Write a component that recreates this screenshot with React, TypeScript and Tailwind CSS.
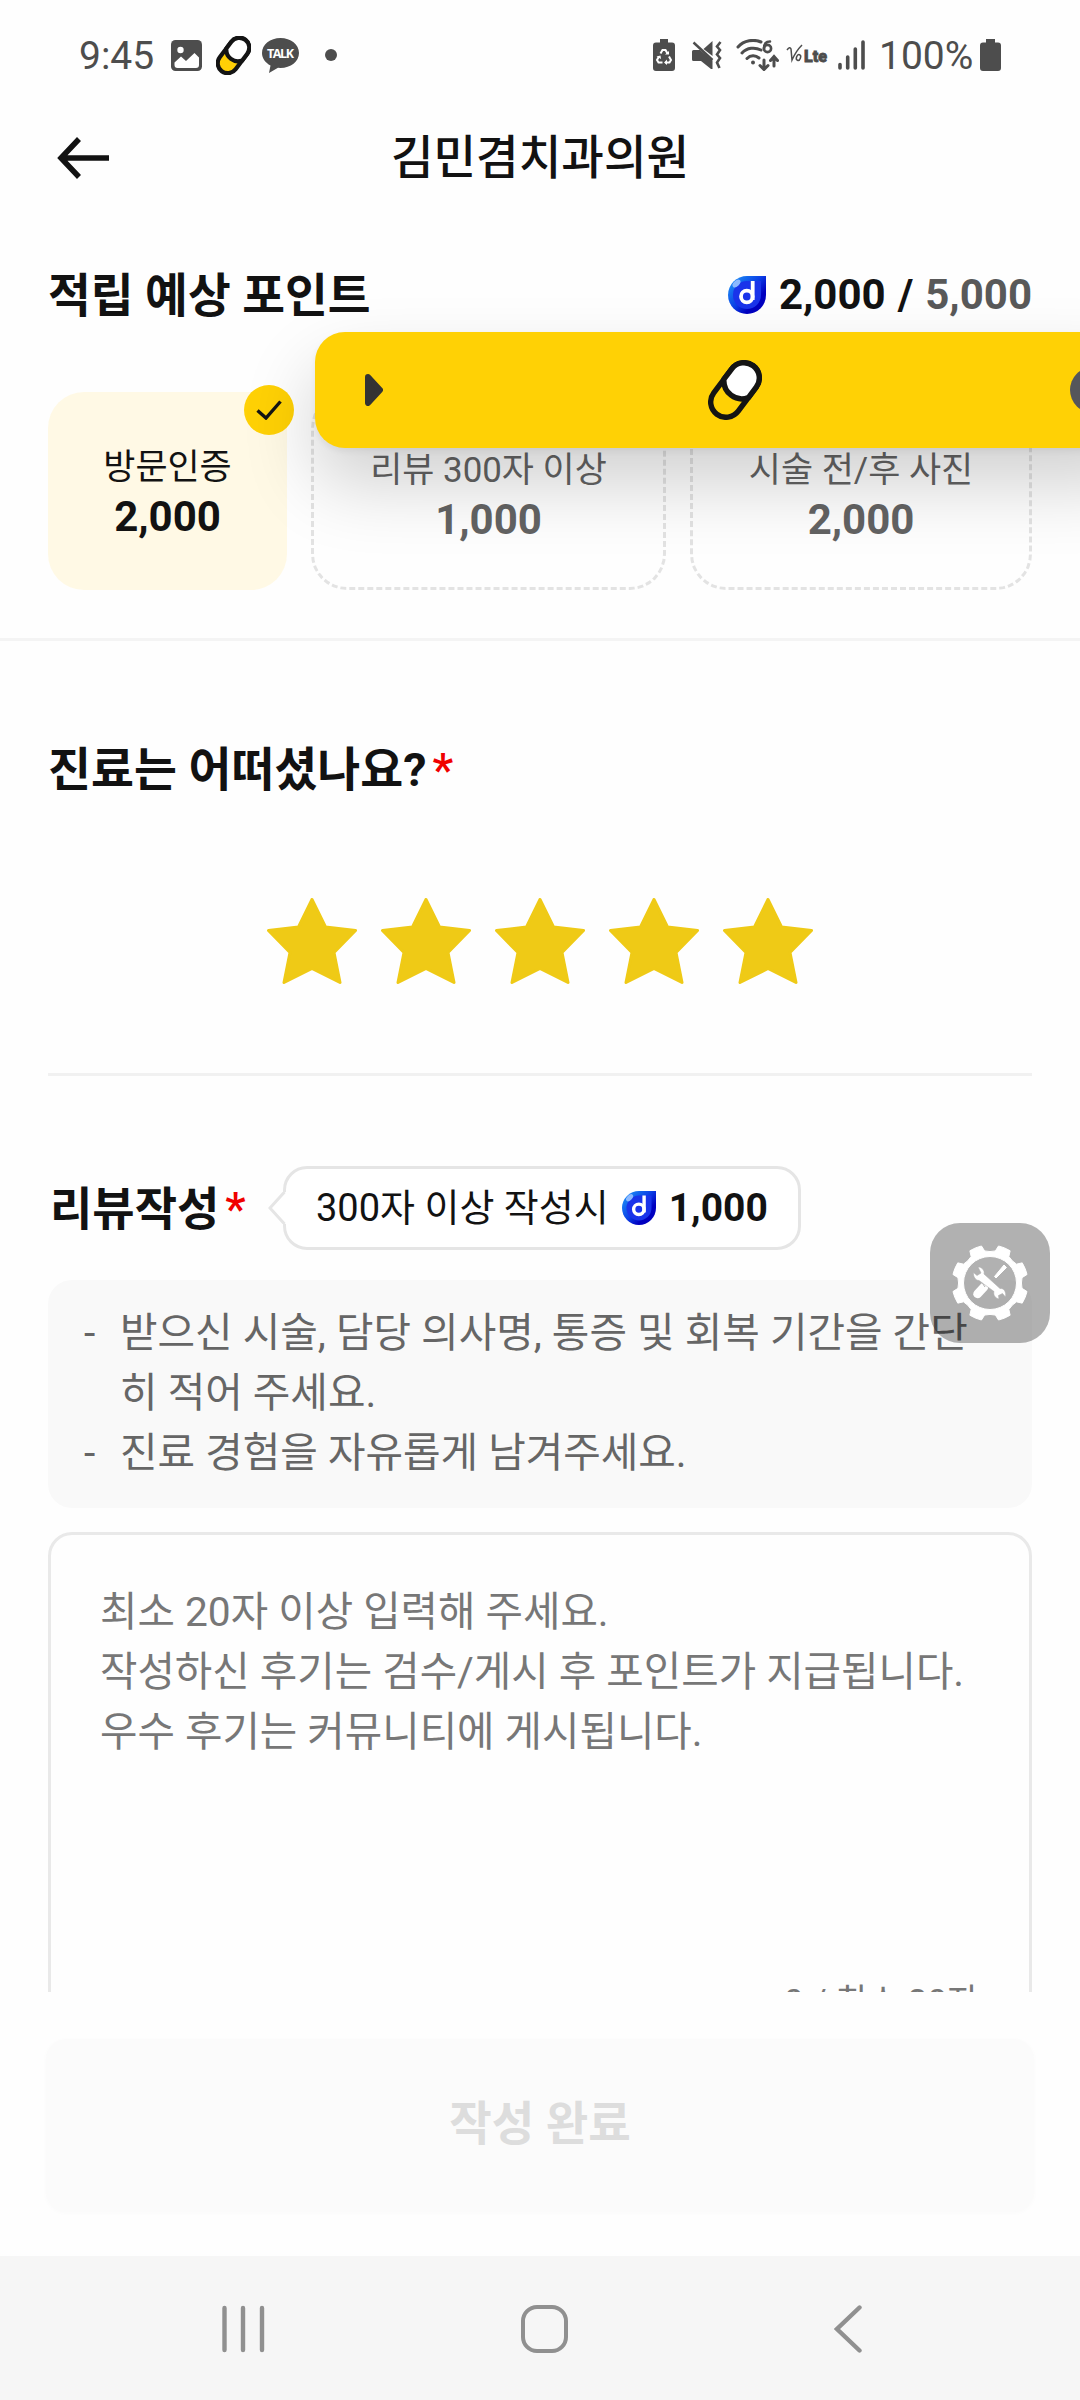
import type {ReactNode} from 'react';
import clsx from 'clsx';

const TIPS = [
  '받으신 시술, 담당 의사명, 통증 및 회복 기간을 간단히 적어 주세요.',
  '진료 경험을 자유롭게 남겨주세요.',
];

const REWARDS = [
  {label: '방문인증', point: '2,000', done: true, width: 'w-[239px]'},
  {label: '리뷰 300자 이상', point: '1,000', done: false, width: 'w-[355px]'},
  {label: '시술 전/후 사진', point: '2,000', done: false, width: 'w-[342px]'},
];

function Pill({className, fill = 'none', stroke = 5.4}: {className?: string; fill?: string; stroke?: number}) {
  return (
    <svg viewBox="0 0 54 60" className={className}>
      <g transform="translate(18 42) rotate(-53.13)" stroke="#141414" strokeWidth={stroke} strokeLinejoin="round">
        <rect x="-15.3" y="-15.3" width="60.6" height="30.6" rx="15.3" fill={fill}/>
        <path d="M17 -15.3H30A15.3 15.3 0 0 1 30 15.3H17A18 18 0 0 1 17 -15.3Z" fill="#fff"/>
      </g>
    </svg>
  );
}

function PointIcon({className}: {className?: string}) {
  return (
    <svg viewBox="0 0 38 38" className={className}>
      <defs>
        <linearGradient id="drop" x1="0.1" y1="0.1" x2="0.9" y2="0.8">
          <stop offset="0" stopColor="#1c8cf5"/>
          <stop offset="0.5" stopColor="#0b3fe6"/>
          <stop offset="0.8" stopColor="#0000c0"/>
        </linearGradient>
      </defs>
      <path d="M19 0H38V19A19 19 0 1 1 19 0Z" fill="url(#drop)"/>
      <path d="M19 5H33V19A14 14 0 1 1 19 5Z" fill="#1a34ea"/>
      <ellipse cx="8.5" cy="7.5" rx="4.8" ry="2.8" fill="#8db9ff" transform="rotate(-45 8.5 7.5)"/>
      <circle cx="18.8" cy="20.5" r="5.8" fill="none" stroke="#fff" strokeWidth="3.8"/>
      <path d="M24.7 5V24" stroke="#fff" strokeWidth="3.8"/>
    </svg>
  );
}

function StatusBar() {
  return (
    <div className="flex h-[110px] shrink-0 items-center justify-between pl-[79px] pr-[79px] text-[39px] leading-[40px] text-[#4d4d4d]">
      <div className="flex items-center">
        <span className="w-[92px] pt-px">9:45</span>
        <svg viewBox="0 0 31 31" className="size-[31px]">
          <rect width="31" height="31" rx="4.5" fill="#4d4d4d"/>
          <circle cx="9.5" cy="10" r="3.2" fill="#fff"/>
          <path d="M3.5 25V22.5L10 16.5L15 21L23.5 13L28 17.5V25Q28 28 25 28H6.500Q3.500 28 3.500 25Z" fill="#fff"/>
        </svg>
        <Pill className="ml-[14px] h-[39px] w-[35px]" fill="#ffcf06" stroke={6.5}/>
        <svg viewBox="0 0 37 35" className="ml-[11px] h-[35px] w-[37px]">
          <path d="M18.500 0C28.700 0 37 6.600 37 15S28.700 30 18.500 30L16 29.800L7 35L8.500 27.500C3.300 24.700 0 20.300 0 15C0 6.600 8.300 0 18.500 0Z" fill="#4d4d4d"/>
          <text x="18.500" y="20" textAnchor="middle" fontSize="12.500" fontWeight="700" fill="#fff" textLength="27" className="font-['Open_Sans',sans-serif]">TALK</text>
        </svg>
        <span className="ml-[26px] size-3 rounded-full bg-[#4d4d4d]"/>
      </div>
      <div className="flex items-center">
        <svg viewBox="0 0 22 32" className="h-8 w-[22px]">
          <path d="M7 0H15V3.500H19Q22 3.500 22 6.500V29Q22 32 19 32H3Q0 32 0 29V6.500Q0 3.500 3 3.500H7Z" fill="#4d4d4d"/>
          <path d="M7.500 14.500L9.500 11H12.500L14.500 14.500M16 17.500L18 21L16.500 23.500H12.500M9.500 23.500H5.500L4 21L6 17.500" fill="none" stroke="#fff" strokeWidth="2"/>
          <path d="M12 15.500H16V12ZM14 20.500V26L11 23.500ZM3.500 17.500L7.500 16.500L8 20Z" fill="#fff"/>
        </svg>
        <svg viewBox="0 0 30 28" className="ml-[17px] h-7 w-[30px]">
          <path d="M0 10.500Q0 9 1.500 9H8L20.500 19.500V28H19L9 20H1.500Q0 20 0 18.500ZM11.500 8L20.500 0V15Z" fill="#4d4d4d"/>
          <path d="M1.500 1.500L20.500 19" stroke="#4d4d4d" strokeWidth="2.400"/>
          <path d="M28.500 1L25 5.500L28 9L25 13.500L28 17L25 21.500L27.500 27" fill="none" stroke="#4d4d4d" strokeWidth="2.600"/>
        </svg>
        <svg viewBox="0 0 43 32" className="ml-[14px] h-8 w-[43px]">
          <g fill="none" stroke="#4d4d4d" strokeWidth="3" strokeLinecap="round">
            <path d="M2 8C8 1 18 0 25 3M6 14C11 8.500 19 8 25 11M11 19.500C14.500 16 19.500 16 23 19"/>
            <path d="M28 21V30M24 26.500L28 30.500L32 26.500M38 27V18M34.500 21.500L38 17.500L41.500 21.500"/>
            <path d="M34 2.500C30 2.500 28 5 28 9.500" strokeWidth="2.600"/>
            <circle cx="31.500" cy="9.500" r="3.600" strokeWidth="2.600"/>
          </g>
          <circle cx="17" cy="23.500" r="2" fill="#4d4d4d"/>
        </svg>
        <svg viewBox="0 0 42 24" className="ml-[7px] h-6 w-[42px]" fill="#4d4d4d">
          <path d="M1 7Q4 3 5 6L6 17Q10 8 16 2" fill="none" stroke="#4d4d4d" strokeWidth="1.500"/>
          <ellipse cx="12.500" cy="14.500" rx="2" ry="3" fill="none" stroke="#4d4d4d" strokeWidth="1.500" transform="rotate(20 12.500 14.500)"/>
          <text x="18" y="19" fontSize="17" fontWeight="900" textLength="23" lengthAdjust="spacingAndGlyphs" stroke="#4d4d4d" strokeWidth="0.800">Lte</text>
        </svg>
        <svg viewBox="0 0 27 30" className="ml-[10px] h-[30px] w-[27px]">
          <path d="M2 24.500V28M9.700 17V28M17.300 9V28M25 2V28" stroke="#4d4d4d" strokeWidth="3.600" strokeLinecap="round"/>
        </svg>
        <span className="ml-[14px] w-[101px] whitespace-nowrap pt-px">100%</span>
        <svg viewBox="0 0 21 32" className="h-8 w-[21px]">
          <path d="M6 0H15V3.500H18Q21 3.500 21 6.500V29Q21 32 18 32H3Q0 32 0 29V6.500Q0 3.500 3 3.500H6Z" fill="#4d4d4d"/>
        </svg>
      </div>
    </div>
  );
}

function Title({children, className}: {children: ReactNode; className?: string}) {
  return <h2 className={clsx('whitespace-nowrap font-bold leading-[60px]', className)}>{children}</h2>;
}

function Reward({item}: {item: typeof REWARDS[number]}) {
  return (
    <div className={clsx(
      'relative flex h-[198px] shrink-0 flex-col items-center rounded-[36px] whitespace-nowrap',
      item.width,
      item.done ? 'bg-[#fff9e5] pt-[51px]' : 'border-[3px] border-dashed border-[#e3e3e3] pt-[51px] text-[#636363]',
    )}>
      <span className="text-[34.9px] leading-[50px]">{item.label}</span>
      <span className="text-[42px] font-bold leading-[48px]">{item.point}</span>
      {item.done && (
        <span className="absolute -right-[7px] -top-[7px] flex size-[50px] items-center justify-center rounded-full bg-[#ffd105]">
          <svg viewBox="0 0 26 20" className="h-5 w-[26px]">
            <path d="M1.500 10.500L10 18L24.500 1.500" fill="none" stroke="#141414" strokeWidth="3.400"/>
          </svg>
        </span>
      )}
    </div>
  );
}

function Star() {
  return (
    <svg viewBox="0 0 90 86" className="h-[86px] w-[90px]">
      <path d="M45 1.500L58.500 29L88.500 32.500L67 54.500L73 84.500L45 70.500L17 84.500L23 54.500L1.500 32.500L31.500 29Z" fill="#efca16" stroke="#efca16" strokeWidth="3" strokeLinejoin="round"/>
    </svg>
  );
}

// outline of an eight-tooth gear centred in a 76x76 box
function gearOutline() {
  const at = (r: number, deg: number) => {
    const a = deg * Math.PI / 180;
    return `${(38 + r * Math.cos(a)).toFixed(2)} ${(38 + r * Math.sin(a)).toFixed(2)}`;
  };
  const teeth = [];
  for (let i = 0; i < 8; i++) {
    const c = i * 45 + 22.5;
    teeth.push(`${at(32.5, c - 13)}L${at(38, c - 9.5)}Q${at(38.5, c)} ${at(38, c + 9.5)}L${at(32.5, c + 13)}Q${at(30.8, c + 22.5)} `);
  }
  return `M${teeth.join('')}${at(32.5, 9.5)}Z`;
}

function ToolButton() {
  return (
    <button className="absolute left-[930px] top-[1223px] flex size-[120px] items-center justify-center rounded-[30px] bg-black/30">
      <svg viewBox="0 0 76 76" className="size-[76px]">
        <path d={`${gearOutline()}M38 11.500A26.500 26.500 0 1 0 38 64.500A26.500 26.500 0 1 0 38 11.500Z`} fill="#fff" fillRule="evenodd" stroke="#fff" strokeWidth="1" strokeLinejoin="round"/>
        <path d="M52 20L54.500 22.500L44 33L42.500 31.500Z" fill="#fff" stroke="#fff" strokeWidth="1"/>
        <path d="M32 42L25.500 49" stroke="#fff" strokeWidth="8.500" strokeLinecap="round"/>
        <path d="M29 36L33 42M32 36L37 41" stroke="#afafaf" strokeWidth="1"/>
        <path d="M26 22C29.500 22 33 25 32 29L48 43.500C52 43 54.500 47 53.500 52L50.500 48.500L46.500 50.500L47 54C43 53 41 50 42 46.500L27 35.500C23.500 35.500 21 31.500 21.500 27.500L25 30.500L29 28Z" fill="#fff" stroke="#afafaf" strokeWidth="0.600"/>
      </svg>
    </button>
  );
}

function FloatingBar() {
  return (
    <div className="absolute left-[315px] top-[332px] flex h-[116px] w-[830px] items-center rounded-[30px] bg-[#ffd105] pl-[50px] shadow-[0_36px_72px_rgba(0,0,0,0.18),0_3px_6px_rgba(0,0,0,0.06)]">
      <svg viewBox="0 0 18 32" className="h-8 w-[18px]">
        <path d="M3 3L15 16L3 29Z" fill="#333" stroke="#333" strokeWidth="6" strokeLinejoin="round"/>
      </svg>
      <Pill className="ml-[325px] h-[60px] w-[54px]"/>
      <span className="ml-[308px] size-[46px] rounded-full bg-[#55565b]"/>
    </div>
  );
}

function NavigationBar() {
  return (
    <div className="flex h-[144px] items-center bg-[#f6f6f6] pl-[221px] pt-[2px]">
      <svg viewBox="0 0 44 48" className="h-12 w-11">
        <path d="M3.500 3V45M22 3V45M41 3V45" stroke="#909090" strokeWidth="4.400" strokeLinecap="round"/>
      </svg>
      <span className="ml-[256px] h-12 w-[47px] rounded-[16px] border-4 border-[#909090]"/>
      <svg viewBox="0 0 28 48" className="ml-[266px] h-12 w-7">
        <path d="M25.500 2.500L3 24L25.500 45.500" fill="none" stroke="#909090" strokeWidth="4.400" strokeLinecap="round"/>
      </svg>
    </div>
  );
}

export default function App() {
  return (
    <div className="relative flex h-[2400px] w-[1080px] flex-col overflow-hidden bg-[#fefefe] font-['Roboto','Noto_Sans_CJK_KR',sans-serif] text-[#121212]">
      <StatusBar/>

      <main className="h-[1882px] shrink-0 overflow-hidden">
        <header className="grid h-[96px] grid-cols-[110px_1fr_110px] items-center">
          <svg viewBox="0 0 53 42" className="ml-[57px] h-[42px] w-[53px]">
            <path d="M52 21H5M22 2L4 21L22 40" fill="none" stroke="#121212" strokeWidth="5.500"/>
          </svg>
          <h1 className="text-center text-[46.3px] font-medium leading-[60px]">김민겸치과의원</h1>
        </header>

        <section className="h-[435px] border-b-[3px] border-[#f4f4f4] px-12">
          <div className="flex h-[186px] items-center justify-between pb-[8px]">
            <Title className="pt-px text-[46.5px]">적립 예상 포인트</Title>
            <div className="flex items-center text-[42px] font-bold leading-[60px]">
              <PointIcon className="mr-[13px] size-[38px]"/>
              <span>2,000</span>
              <span className="mx-[12px]">/</span>
              <span className="text-[#595959]">5,000</span>
            </div>
          </div>
          <div className="flex gap-6">
            {REWARDS.map(item => <Reward key={item.label} item={item}/>)}
          </div>
        </section>

        <section className="mx-12 h-[435px] border-b-[3px] border-[#f1f1f1] pt-[99px]">
          <Title className="text-[46.7px]">진료는 어떠셨나요?<span className="ml-[6px] font-medium text-[#f00000]">*</span></Title>
          <div className="mt-[98px] flex justify-center gap-6">
            {[1, 2, 3, 4, 5].map(n => <Star key={n}/>)}
          </div>
        </section>

        <section className="px-12 pt-[90px]">
          <div className="flex items-center">
            <Title className="w-[235px] pl-[2px] pt-px text-[46px]">리뷰작성<span className="ml-[6px] font-medium text-[#f00000]">*</span></Title>
            <div className="relative flex h-[84px] w-[518px] items-center rounded-[24px] border-[3px] border-[#e5e5e5] bg-white pl-[30px] whitespace-nowrap">
              <svg viewBox="0 0 18 32" className="absolute -left-[18px] top-[23px] h-8 w-[18px]">
                <path d="M18 0V32H15.500L1.500 16L15.500 0Z" fill="#fff"/>
                <path d="M16.500 0L2 16L16.500 32" fill="none" stroke="#e5e5e5" strokeWidth="3"/>
              </svg>
              <span className="text-[38px]">300자 이상 작성시</span>
              <PointIcon className="ml-[13px] size-[34px]"/>
              <span className="ml-[13px] text-[39px] font-bold">1,000</span>
            </div>
          </div>

          <ul className="mt-[30px] h-[228px] rounded-[24px] bg-[#f9f9f9] pl-9 pt-[23px] text-[40.8px] leading-[60px] text-[#666]">
            {TIPS.map(tip => (
              <li key={tip} className="flex">
                <span className="w-[36px] shrink-0">-</span>
                <p className="w-[870px] break-all">{tip}</p>
              </li>
            ))}
          </ul>

          <div className="mt-6 h-[560px] rounded-[24px] border-[3px] border-[#e9e9e9] pl-[49px] pr-[50px] pt-[47px] text-[40.7px] leading-[60px] text-[#777]">
            <p className="h-[390px] whitespace-nowrap">
              최소 20자 이상 입력해 주세요.<br/>
              작성하신 후기는 검수/게시 후 포인트가 지급됩니다.<br/>
              우수 후기는 커뮤니티에 게시됩니다.
            </p>
            <p className="text-right text-[34.8px]">0 / 최소 20자</p>
          </div>
        </section>
      </main>

      <div className="h-[264px] shrink-0 px-[46px] pt-[47px]">
        <button className="h-[173px] w-full rounded-[20px] bg-[#fbfbfb] pb-[3px] text-[46.2px] font-bold leading-[60px] text-[#ddd] shadow-[0_1px_5px_rgba(0,0,0,0.02)]">작성 완료</button>
      </div>

      <NavigationBar/>
      <FloatingBar/>
      <ToolButton/>
    </div>
  );
}
